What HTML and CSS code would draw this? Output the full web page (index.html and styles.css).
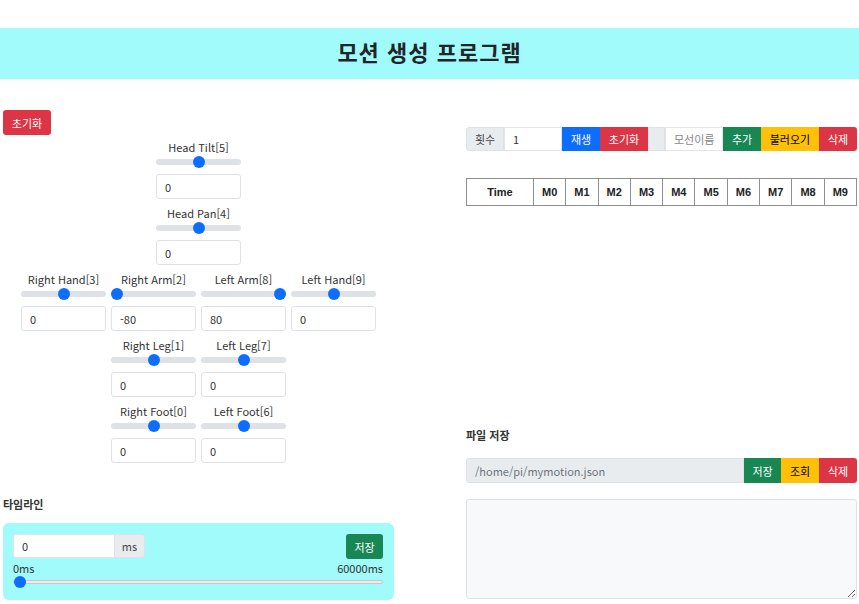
FILE: index.html
```html
<!DOCTYPE html>
<html lang="ko">
<head>
<meta charset="utf-8">
<title>모션 생성 프로그램</title>
<link rel="stylesheet" href="styles.css">
</head>
<body>
<header class="banner"><h1 class="title">모션 생성 프로그램</h1></header>
<main class="layout">
  <section class="left">
    <button class="btn btn-danger btn-reset">초기화</button>
    <div class="controls">
      <div class="row">
        <div class="ctrl"><label class="lbl">Head Tilt[5]</label><input class="range" type="range" min="-90" max="90" value="0"><input class="field" type="text" value="0"></div>
      </div>
      <div class="row">
        <div class="ctrl"><label class="lbl">Head Pan[4]</label><input class="range" type="range" min="-90" max="90" value="0"><input class="field" type="text" value="0"></div>
      </div>
      <div class="row">
        <div class="ctrl"><label class="lbl">Right Hand[3]</label><input class="range" type="range" min="-90" max="90" value="0"><input class="field" type="text" value="0"></div>
        <div class="ctrl"><label class="lbl">Right Arm[2]</label><input class="range" type="range" min="-80" max="80" value="-80"><input class="field" type="text" value="-80"></div>
        <div class="ctrl"><label class="lbl">Left Arm[8]</label><input class="range" type="range" min="-80" max="80" value="80"><input class="field" type="text" value="80"></div>
        <div class="ctrl"><label class="lbl">Left Hand[9]</label><input class="range" type="range" min="-90" max="90" value="0"><input class="field" type="text" value="0"></div>
      </div>
      <div class="row">
        <div class="ctrl"><label class="lbl">Right Leg[1]</label><input class="range" type="range" min="-90" max="90" value="0"><input class="field" type="text" value="0"></div>
        <div class="ctrl"><label class="lbl">Left Leg[7]</label><input class="range" type="range" min="-90" max="90" value="0"><input class="field" type="text" value="0"></div>
      </div>
      <div class="row">
        <div class="ctrl"><label class="lbl">Right Foot[0]</label><input class="range" type="range" min="-90" max="90" value="0"><input class="field" type="text" value="0"></div>
        <div class="ctrl"><label class="lbl">Left Foot[6]</label><input class="range" type="range" min="-90" max="90" value="0"><input class="field" type="text" value="0"></div>
      </div>
    </div>
    <h6 class="section-title timeline-title">타임라인</h6>
    <div class="timeline">
      <div class="tl-top">
        <div class="group">
          <input class="tl-input" type="text" value="0">
          <span class="addon tl-ms">ms</span>
        </div>
        <button class="btn btn-success tl-save">저장</button>
      </div>
      <div class="tl-scale"><span>0ms</span><span>60000ms</span></div>
      <input class="tl-range" type="range" min="0" max="60000" value="0">
    </div>
  </section>
  <section class="right">
    <div class="group motion-bar">
      <span class="addon w38">횟수</span>
      <input class="gfield w58" type="text" value="1">
      <button class="btn btn-primary w38">재생</button>
      <button class="btn btn-danger w48">초기화</button>
      <span class="addon w17"></span>
      <input class="gfield w58" type="text" placeholder="모선이름">
      <button class="btn btn-success w38">추가</button>
      <button class="btn btn-warning w58">불러오기</button>
      <button class="btn btn-danger w38 last">삭제</button>
    </div>
    <table class="motion-table">
      <colgroup><col class="c-time"><col><col><col><col><col><col><col><col><col><col></colgroup>
      <thead><tr><th>Time</th><th>M0</th><th>M1</th><th>M2</th><th>M3</th><th>M4</th><th>M5</th><th>M6</th><th>M7</th><th>M8</th><th>M9</th></tr></thead>
    </table>
    <h6 class="section-title file-title">파일 저장</h6>
    <div class="group file-bar">
      <input class="gfield path" type="text" value="/home/pi/mymotion.json" readonly>
      <button class="btn btn-success w37">저장</button>
      <button class="btn btn-warning w38">조회</button>
      <button class="btn btn-danger w38 last">삭제</button>
    </div>
    <textarea class="output"></textarea>
  </section>
</main>
</body>
</html>
```

FILE: styles.css
```css
* { box-sizing: border-box; }
body {
  margin: 0;
  font-family: "Noto Sans CJK KR", "Noto Sans", sans-serif;
  font-size: 11px;
  color: #212529;
  background: #fff;
}
.banner {
  margin-top: 28px;
  height: 51px;
  background: #a0fbfa;
  display: flex;
  align-items: center;
  justify-content: center;
  padding-bottom: 5px;
}
.title {
  margin: 0;
  font-size: 22px;
  font-weight: 700;
  letter-spacing: 1px;
  line-height: 26px;
  color: #212529;
}
.layout {
  display: grid;
  grid-template-columns: 391px 391px;
  column-gap: 72px;
  padding: 0 2px 0 3px;
  margin-top: 31px;
}
.btn {
  border: 0;
  margin: 0;
  font-family: inherit;
  font-size: 11px;
  color: #fff;
  height: 24px;
  padding: 0;
  display: flex;
  align-items: center;
  justify-content: center;
}
.btn-danger { background: #dc3545; }
.btn-success { background: #198754; }
.btn-primary { background: #0d6efd; }
.btn-warning { background: #ffc107; color: #000; }
.btn-reset { width: 48px; height: 25px; border-radius: 3px; }

.controls {
  display: flex;
  flex-direction: column;
  align-items: center;
  margin-top: 5px;
}
.row {
  display: flex;
  gap: 5px;
  margin-bottom: 7px;
}
.row:last-child { margin-bottom: 0; }
.ctrl {
  width: 85px;
  display: flex;
  flex-direction: column;
  align-items: stretch;
}
.lbl {
  text-align: center;
  line-height: 14px;
  height: 14px;
  color: #333;
}
.range {
  -webkit-appearance: none;
  appearance: none;
  width: 100%;
  height: 12px;
  margin: 2px 0 0;
  background: transparent;
}
.range::-webkit-slider-runnable-track {
  height: 6px;
  background: #dee2e6;
  border-radius: 3px;
}
.range::-webkit-slider-thumb {
  -webkit-appearance: none;
  width: 12px;
  height: 12px;
  border-radius: 50%;
  background: #0d6efd;
  margin-top: -3px;
  border: 0;
}
.field {
  margin-top: 6px;
  height: 25px;
  border: 1px solid #dee2e6;
  border-radius: 3px;
  padding: 0 8px;
  font-family: inherit;
  font-size: 11px;
  color: #333;
  width: 100%;
}
.section-title {
  margin: 0;
  font-size: 11px;
  font-weight: 700;
  line-height: 14px;
  color: #333;
}
.timeline-title { margin-top: 34px; }
.timeline {
  margin-top: 12px;
  background: #a0fbfa;
  border-radius: 6px;
  padding: 11px 11px 10px 10px;
  height: 77px;
}
.tl-top {
  display: flex;
  justify-content: space-between;
  align-items: flex-start;
}
.group { display: flex; }
.tl-input {
  width: 101px;
  height: 24px;
  border: 1px solid #e3e6e8;
  border-right: 0;
  border-radius: 3px 0 0 3px;
  padding: 0 8px;
  font-family: inherit;
  font-size: 11px;
  color: #333;
}
.addon {
  background: #e9ecef;
  border: 1px solid #dee2e6;
  height: 24px;
  display: flex;
  align-items: center;
  justify-content: center;
  color: #444;
}
.tl-ms { width: 31px; border-radius: 0 3px 3px 0; }
.tl-save { width: 37px; height: 25px; border-radius: 3px; }
.tl-scale {
  display: flex;
  justify-content: space-between;
  line-height: 14px;
  margin-top: 2px;
  color: #333;
}
.tl-range {
  -webkit-appearance: none;
  appearance: none;
  width: 100%;
  height: 12px;
  margin: 1px 0 0;
  background: transparent;
}
.tl-range::-webkit-slider-runnable-track {
  height: 4px;
  background: #ececec;
  border: 1px solid #c8c8c8;
  border-radius: 2px;
}
.tl-range::-webkit-slider-thumb {
  -webkit-appearance: none;
  width: 12px;
  height: 12px;
  border-radius: 50%;
  background: #0d6efd;
  margin-top: -5px;
}

.right { padding-top: 17px; }
.motion-bar .addon:first-child { border-radius: 3px 0 0 3px; }
.gfield {
  height: 24px;
  border: 1px solid #e3e6e8;
  padding: 0 8px;
  font-family: inherit;
  font-size: 11px;
  color: #333;
  margin: 0;
}
.gfield::placeholder { color: #888; }
.w17 { width: 17px; }
.w37 { width: 37px; }
.w38 { width: 38px; }
.w48 { width: 48px; }
.w58 { width: 58px; }
.last { border-radius: 0 3px 3px 0; }
.motion-table {
  margin-top: 27px;
  width: 391px;
  border-collapse: collapse;
  table-layout: fixed;
}
.c-time { width: 67px; }
.motion-table th {
  border: 1px solid #8f8f8f;
  height: 27px;
  padding: 0;
  font-family: "Liberation Sans", Arial, sans-serif;
  font-size: 11px;
  font-weight: 700;
  text-align: center;
  color: #222;
}
.file-title { margin-top: 222px; }
.file-bar { margin-top: 16px; }
.file-bar .btn { height: 25px; }
.path {
  width: 278px;
  height: 25px;
  background: #e9ecef;
  border: 1px solid #dee2e6;
  border-radius: 3px 0 0 3px;
  color: #6c757d;
}
.output {
  display: block;
  margin-top: 16px;
  width: 391px;
  height: 100px;
  background: #f8f9fa;
  border: 1px solid #dee2e6;
  border-radius: 3px;
  resize: vertical;
}
```
